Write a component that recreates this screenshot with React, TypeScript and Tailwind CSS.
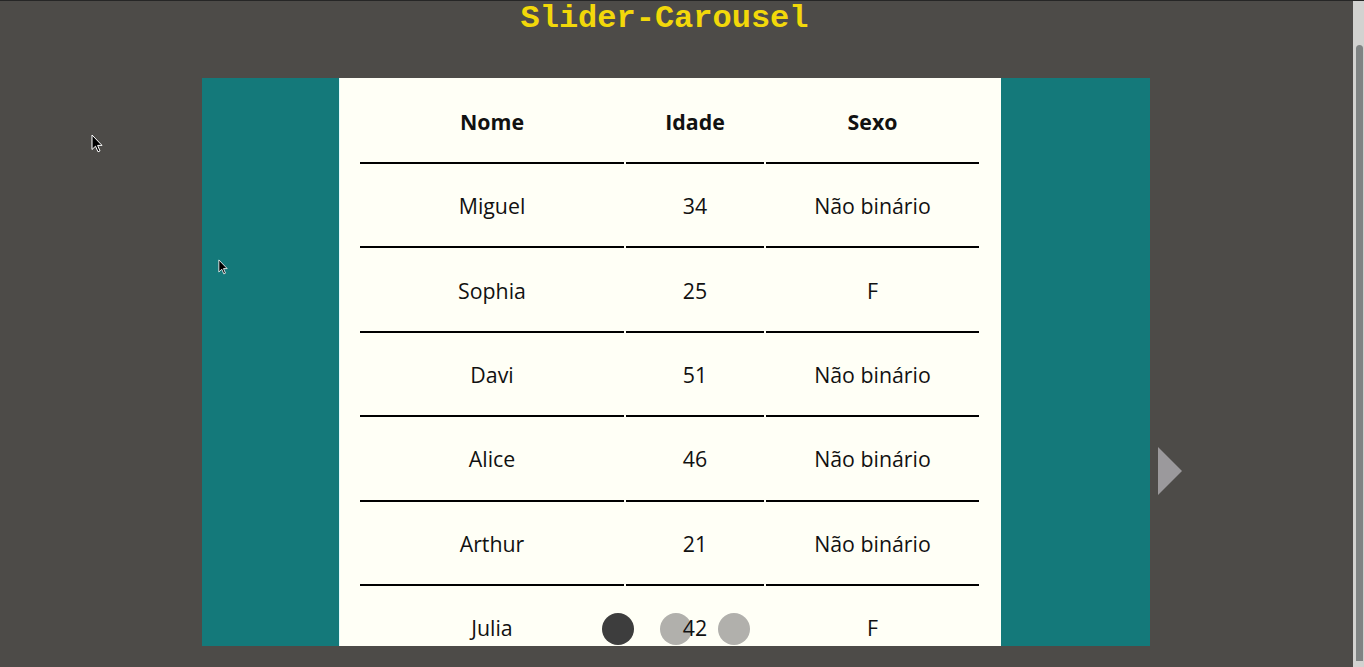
import React from 'react';

const people = [
  { nome: 'Miguel', idade: 34, sexo: 'Não binário' },
  { nome: 'Sophia', idade: 25, sexo: 'F' },
  { nome: 'Davi', idade: 51, sexo: 'Não binário' },
  { nome: 'Alice', idade: 46, sexo: 'Não binário' },
  { nome: 'Arthur', idade: 21, sexo: 'Não binário' },
  { nome: 'Julia', idade: 42, sexo: 'F' },
];

const Cursor = ({ className }: { className: string }) => (
  <svg viewBox="0 0 12 19" className={className}>
    <path d="M1 1 L1 15.5 L4.5 12.2 L7 17.8 L9 16.9 L6.6 11.4 L11 11.4 Z" fill="#000" stroke="#fff" strokeWidth="1" strokeLinejoin="round" />
  </svg>
);

const App: React.FC = () => {
  return (
    <div className="h-[667px] w-full flex overflow-hidden bg-[#4d4b48] border-t border-[#262626]">
      <main className="flex-1 relative flex flex-col">
        <h1 className="w-full text-center pr-[24px] text-[32px] leading-9 font-bold text-[#f2d80a] font-['Liberation_Mono',monospace]">
          Slider-Carousel
        </h1>

        <div className="relative mt-[41px] ml-[202px] w-[948px] h-[568px] bg-[#14797a] flex pl-[137px] pr-[149px]">
          <div className="flex-1 bg-[#fffff6] border-l border-[#e4fbfb] overflow-hidden pl-[18px] font-['Open_Sans',sans-serif] text-[#111]">
            <table className="relative z-10 table-fixed border-separate border-spacing-[2px] w-[623px] text-[21.33px] text-center">
              <thead>
                <tr>
                  <th className="w-[264px] h-[84px] pt-[1px] border-b-2 border-black font-bold">Nome</th>
                  <th className="w-[138px] h-[84px] pt-[1px] border-b-2 border-black font-bold">Idade</th>
                  <th className="w-[213px] h-[84px] pt-[1px] border-b-2 border-black font-bold">Sexo</th>
                </tr>
              </thead>
              <tbody>
                {people.map((p) => (
                  <tr key={p.nome}>
                    <td className="h-[82.4px] border-b-2 border-black">{p.nome}</td>
                    <td className="h-[82.4px] border-b-2 border-black">{p.idade}</td>
                    <td className="h-[82.4px] border-b-2 border-black">{p.sexo}</td>
                  </tr>
                ))}
              </tbody>
            </table>
          </div>

          {/* next arrow */}
          <button className="absolute left-[956px] top-[369px] w-[24px] h-[48px]">
            <svg viewBox="0 0 24 48" className="w-full h-full">
              <path d="M0 0 L24 24 L0 48 Z" fill="#9b999c" />
            </svg>
          </button>

          {/* dots, drawn under the table text */}
          <div className="absolute bottom-[1px] left-[400px] flex gap-[26px]">
            <span className="w-[32px] h-[32px] rounded-full bg-[#3d3d3d]" />
            <span className="w-[32px] h-[32px] rounded-full bg-[#b1b0ac]" />
            <span className="w-[32px] h-[32px] rounded-full bg-[#b1b0ac]" />
          </div>
        </div>

        <Cursor className="absolute left-[91px] top-[133px] w-[12px] h-[19px]" />
        <Cursor className="absolute left-[218px] top-[258px] w-[10px] h-[16px]" />
      </main>

      {/* scrollbar */}
      <div className="w-[11px] bg-[#d2d2d0] flex pl-[3px] pr-[1px] pt-[44px] pb-[6px]">
        <div className="flex-1 bg-[#7f8383] rounded-t-sm" />
      </div>
    </div>
  );
};

export default App;
